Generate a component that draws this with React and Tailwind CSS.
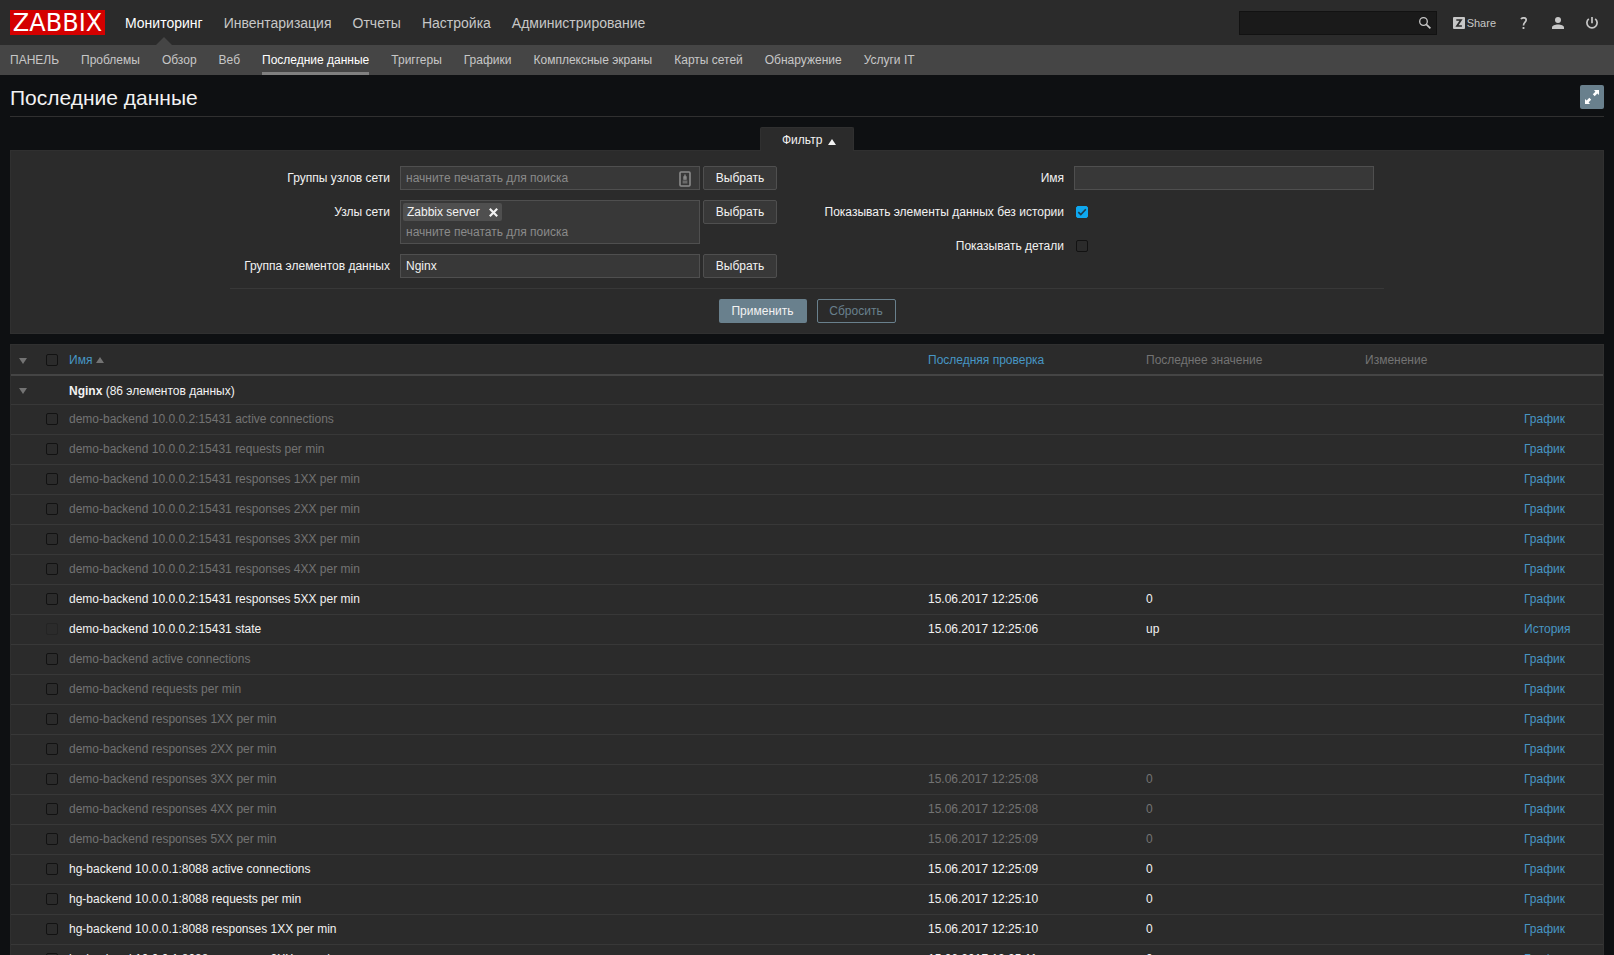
import React from "react";

const mainMenu = ["Мониторинг", "Инвентаризация", "Отчеты", "Настройка", "Администрирование"];

const subMenu = [
  "ПАНЕЛЬ",
  "Проблемы",
  "Обзор",
  "Веб",
  "Последние данные",
  "Триггеры",
  "Графики",
  "Комплексные экраны",
  "Карты сетей",
  "Обнаружение",
  "Услуги IT",
];

const items = [
  { name: "demo-backend 10.0.0.2:15431 active connections", active: false },
  { name: "demo-backend 10.0.0.2:15431 requests per min", active: false },
  { name: "demo-backend 10.0.0.2:15431 responses 1XX per min", active: false },
  { name: "demo-backend 10.0.0.2:15431 responses 2XX per min", active: false },
  { name: "demo-backend 10.0.0.2:15431 responses 3XX per min", active: false },
  { name: "demo-backend 10.0.0.2:15431 responses 4XX per min", active: false },
  { name: "demo-backend 10.0.0.2:15431 responses 5XX per min", active: true, checked: "15.06.2017 12:25:06", value: "0" },
  { name: "demo-backend 10.0.0.2:15431 state", active: true, checked: "15.06.2017 12:25:06", value: "up", text: true },
  { name: "demo-backend active connections", active: false },
  { name: "demo-backend requests per min", active: false },
  { name: "demo-backend responses 1XX per min", active: false },
  { name: "demo-backend responses 2XX per min", active: false },
  { name: "demo-backend responses 3XX per min", active: false, checked: "15.06.2017 12:25:08", value: "0" },
  { name: "demo-backend responses 4XX per min", active: false, checked: "15.06.2017 12:25:08", value: "0" },
  { name: "demo-backend responses 5XX per min", active: false, checked: "15.06.2017 12:25:09", value: "0" },
  { name: "hg-backend 10.0.0.1:8088 active connections", active: true, checked: "15.06.2017 12:25:09", value: "0" },
  { name: "hg-backend 10.0.0.1:8088 requests per min", active: true, checked: "15.06.2017 12:25:10", value: "0" },
  { name: "hg-backend 10.0.0.1:8088 responses 1XX per min", active: true, checked: "15.06.2017 12:25:10", value: "0" },
  { name: "hg-backend 10.0.0.1:8088 responses 2XX per min", active: true, checked: "15.06.2017 12:25:11", value: "0" },
];

function Triangle({ up, className }) {
  return (
    <svg viewBox="0 0 8 6" className={`inline-block h-[6px] w-[8px] fill-current ${className || ""}`} aria-hidden="true">
      <path d={up ? "M4 0L8 6H0z" : "M0 0H8L4 6z"} />
    </svg>
  );
}

function Checkbox({ id, label, defaultChecked, disabled }) {
  return (
    <span className="relative block h-3 w-3">
      <input
        id={id}
        type="checkbox"
        aria-label={label}
        defaultChecked={defaultChecked}
        disabled={disabled}
        className="peer block h-3 w-3 appearance-none rounded-[2px] border border-[#121212] checked:border-[#0fa8f0] checked:bg-[#0fa8f0] disabled:border-[#242424]"
      />
      <svg
        viewBox="0 0 12 12"
        className="pointer-events-none absolute inset-0 hidden h-3 w-3 peer-checked:block"
        fill="none"
        stroke="#1f3a4a"
        strokeWidth="1.6"
        aria-hidden="true"
      >
        <path d="M2.3 6.1L4.8 8.6L9.8 3.3" />
      </svg>
    </span>
  );
}

function Header() {
  return (
    <header>
      <div className="flex h-[45px] items-center justify-between bg-[#2b2b2b] px-[10px]">
        <div className="flex items-center gap-5">
          <a href="#" className="flex h-[25px] w-[95px] items-center justify-center bg-[#d40000] pt-[2px] font-['DejaVu_Sans',sans-serif] text-[24px] leading-[25px] text-white">
            ZABBIX
          </a>
          <nav className="flex h-[45px] items-center gap-[21px] text-[14px] leading-4">
            {mainMenu.map((item, index) => (
              <a
                key={item}
                href="#"
                className={`relative flex h-full items-center ${index === 0 ? "text-white" : "text-[#c7c7c7]"}`}
              >
                {item}
                {index === 0 && (
                  <svg viewBox="0 0 16 8" className="absolute bottom-0 left-1/2 h-2 w-4 -translate-x-1/2 fill-[#454545]" aria-hidden="true">
                    <path d="M8 0L16 8H0z" />
                  </svg>
                )}
              </a>
            ))}
          </nav>
        </div>

        <div className="flex items-center pr-[6px] text-[#c7c7c7]">
          <form className="flex h-6 w-[198px] items-center border border-[#121212] bg-[#1a1a1a] pr-[5px]">
            <input type="text" aria-label="Поиск" className="min-w-0 flex-1 bg-transparent px-1 outline-none" />
            <button type="button" aria-label="Найти">
              <svg viewBox="0 0 12 12" className="block h-3 w-3" fill="none" stroke="currentColor" aria-hidden="true">
                <circle cx="4.5" cy="4.5" r="3.8" strokeWidth="1.3" />
                <path d="M7.3 7.3L11.4 11.4" strokeWidth="1.7" />
              </svg>
            </button>
          </form>
          <a href="#" className="ml-4 flex items-center gap-[2px] text-[11px] leading-4">
            <svg viewBox="0 0 12 12" className="h-3 w-3" aria-hidden="true">
              <rect width="12" height="12" rx="1" fill="currentColor" />
              <path d="M3.3 3H8L4 9H8.9" fill="none" stroke="#2b2b2b" strokeWidth="1.7" />
            </svg>
            Share
          </a>
          <a href="#" aria-label="Справка" className="ml-[22px]">
            <svg viewBox="0 0 12 12" className="h-3 w-3" fill="none" stroke="currentColor" strokeWidth="1.7" aria-hidden="true">
              <path d="M3 2.2C3.6 1.1 4.6.8 5.6.8C7.3.8 8.2 1.7 8.2 3C8.2 5 5.5 5.4 5.5 8.4" />
              <path d="M4.6 11H6.4" strokeWidth="2" />
            </svg>
          </a>
          <a href="#" aria-label="Профиль" className="ml-[22px]">
            <svg viewBox="0 0 12 12" className="h-3 w-3 fill-current" aria-hidden="true">
              <circle cx="6" cy="3" r="3" />
              <path d="M0 12V10.6C0 8.6 3 7.6 6 7.6S12 8.6 12 10.6V12z" />
            </svg>
          </a>
          <a href="#" aria-label="Выход" className="ml-[22px]">
            <svg viewBox="0 0 12 12" className="h-3 w-3" fill="none" stroke="currentColor" strokeWidth="1.7" aria-hidden="true">
              <path d="M6 0V6.2" />
              <path d="M2.8 1.8A5.1 5.1 0 1 0 9.2 1.8" />
            </svg>
          </a>
        </div>
      </div>

      <nav className="flex h-[30px] gap-[22px] bg-[#454545] px-[10px] leading-4">
        {subMenu.map((item) => (
          <a
            key={item}
            href="#"
            className={
              item === "Последние данные"
                ? "border-b-[3px] border-[#808080] pt-[7px] text-white"
                : "pt-[7px] text-[#c7c7c7]"
            }
          >
            {item}
          </a>
        ))}
      </nav>
    </header>
  );
}

function SelectButton() {
  return (
    <button type="button" className="h-6 w-[74px] rounded-[2px] border border-[#4f4f4f] bg-[#383838] leading-4">
      Выбрать
    </button>
  );
}

function Filter() {
  const field = "w-[300px] border border-[#4f4f4f] bg-[#383838]";

  return (
    <section>
      <div className="flex justify-center">
        <button
          type="button"
          className="relative -mb-px flex h-6 w-[94px] items-center gap-[6px] rounded-t-[2px] border border-b-0 border-[#303030] bg-[#2b2b2b] pl-[21px]"
        >
          Фильтр
          <Triangle up className="mt-1" />
        </button>
      </div>
      <form className="border border-[#303030] bg-[#2b2b2b] pt-[15px] pb-[10px]">
        <div className="mx-auto flex w-fit gap-10 border-b border-[#383838] px-[10px] pb-[10px]">
          <div className="grid grid-cols-[150px_auto_auto] items-start gap-y-[10px]">
            <label htmlFor="groups" className="pt-1 text-right leading-4">Группы узлов сети</label>
            <div className={`${field} ml-[10px] flex h-6 items-center px-[5px]`}>
              <input
                id="groups"
                type="text"
                placeholder="начните печатать для поиска"
                className="min-w-0 flex-1 bg-transparent leading-4 outline-none placeholder:text-[#8a8a8a]"
              />
              <svg viewBox="0 0 12 16" className="mt-[2px] mr-[3px] h-4 w-3" fill="none" aria-hidden="true">
                <rect x="1" y="1" width="10" height="14" rx="1" stroke="#8a8a8a" strokeWidth="1.6" />
                <path d="M6 3.5V7M5 6H7V8H5z" stroke="#8a8a8a" strokeWidth="1.4" />
                <path d="M3.6 11H8.4" stroke="#6a6a6a" strokeWidth="3" />
              </svg>
            </div>
            <div className="pl-[3px]"><SelectButton /></div>

            <label htmlFor="hosts" className="pt-1 text-right leading-4">Узлы сети</label>
            <div className={`${field} ml-[10px] h-11 p-[2px]`}>
              <span className="flex h-[18px] w-[99px] items-center justify-between rounded-[2px] bg-[#4f4f4f] px-1 leading-4">
                Zabbix server
                <button type="button" aria-label="Удалить">
                  <svg viewBox="0 0 9 9" className="block h-[9px] w-[9px]" fill="none" stroke="currentColor" strokeWidth="2.2" aria-hidden="true">
                    <path d="M.8.8L8.2 8.2M8.2.8L.8 8.2" />
                  </svg>
                </button>
              </span>
              <input
                id="hosts"
                type="text"
                placeholder="начните печатать для поиска"
                className="mt-px block w-full bg-transparent px-[3px] leading-5 outline-none placeholder:text-[#8a8a8a]"
              />
            </div>
            <div className="pl-[3px]"><SelectButton /></div>

            <label htmlFor="application" className="pt-1 text-right leading-4">Группа элементов данных</label>
            <input id="application" type="text" defaultValue="Nginx" className={`${field} ml-[10px] h-6 px-[5px] leading-4 outline-none`} />
            <div className="pl-[3px]"><SelectButton /></div>
          </div>

          <div className="grid grid-cols-[247px_300px] content-start items-start gap-[10px]">
            <label htmlFor="name" className="pt-1 text-right leading-4">Имя</label>
            <input id="name" type="text" className={`${field} h-6 px-[5px] leading-4 outline-none`} />

            <label htmlFor="without-history" className="h-6 pt-1 text-right leading-4">Показывать элементы данных без истории</label>
            <div className="pt-[6px] pl-[2px]"><Checkbox id="without-history" defaultChecked /></div>

            <label htmlFor="details" className="h-6 pt-1 text-right leading-4">Показывать детали</label>
            <div className="pt-[6px] pl-[2px]"><Checkbox id="details" /></div>
          </div>
        </div>

        <div className="flex justify-center gap-[10px] pt-[10px]">
          <button type="button" className="h-6 w-[88px] rounded-[2px] bg-[#69808d]">Применить</button>
          <button type="button" className="h-6 w-[79px] rounded-[2px] border border-[#69808d] text-[#69808d]">Сбросить</button>
        </div>
      </form>
    </section>
  );
}

function ItemsTable() {
  return (
    <div className="mt-[10px] border border-[#303030] bg-[#2b2b2b]">
      <table className="w-full table-fixed border-collapse text-left leading-4">
        <colgroup>
          <col className="w-[30px]" />
          <col className="w-[23px]" />
          <col />
          <col className="w-[218px]" />
          <col className="w-[219px]" />
          <col className="w-[159px]" />
          <col className="w-[84px]" />
        </colgroup>
        <thead>
          <tr className="h-[30px] border-b-2 border-[#454545] text-[#737373]">
            <th className="pl-2 font-normal">
              <button type="button" aria-label="Свернуть все" className="block pt-[2px]"><Triangle className="block" /></button>
            </th>
            <th className="pl-[5px] font-normal"><Checkbox label="Выбрать все" /></th>
            <th className="pl-[5px] font-normal">
              <a href="#" className="text-[#4796c4]">
                Имя <Triangle up className="text-[#737373]" />
              </a>
            </th>
            <th className="pl-[5px] font-normal"><a href="#" className="text-[#4796c4]">Последняя проверка</a></th>
            <th className="pl-[5px] font-normal">Последнее значение</th>
            <th className="pl-[5px] font-normal">Изменение</th>
            <th />
          </tr>
        </thead>
        <tbody>
          <tr className="h-[29px] border-b border-[#383838]">
            <td className="pl-2 text-[#737373]">
              <button type="button" aria-label="Свернуть Nginx" className="block"><Triangle className="block" /></button>
            </td>
            <td />
            <td colSpan={5} className="pt-[2px] pl-[5px]"><b>Nginx</b> (86 элементов данных)</td>
          </tr>
          {items.map((item) => (
            <tr key={item.name} className={`h-[30px] border-b border-[#383838] ${item.active ? "" : "text-[#737373]"}`}>
              <td />
              <td className="pl-[5px]"><Checkbox label={item.name} disabled={item.text} /></td>
              <td className="pl-[5px]">{item.name}</td>
              <td className="pl-[5px]">{item.checked}</td>
              <td className="pl-[5px]">{item.value}</td>
              <td />
              <td className="pl-[5px]"><a href="#" className="text-[#4796c4]">{item.text ? "История" : "График"}</a></td>
            </tr>
          ))}
        </tbody>
      </table>
    </div>
  );
}

function App() {
  return (
    <div className="min-h-screen bg-[#0e1012] font-['Liberation_Sans',Arial,sans-serif] text-[12px] text-[#f2f2f2]">
      <Header />
      <main className="px-[10px]">
        <div className="mb-[10px] flex items-end justify-between border-b border-[#303030] pt-[10px] pb-[7px]">
          <h1 className="text-[21px] leading-[22px]">Последние данные</h1>
          <button type="button" aria-label="Полный экран" className="flex h-6 w-6 items-center justify-center rounded-[2px] bg-[#69808d]">
            <svg viewBox="0 0 14 14" className="h-[14px] w-[14px] fill-white" aria-hidden="true">
              <path d="M9 0H14V5L12.3 3.6L9.7 6.2L7.8 4.3L10.4 1.7z" />
              <path d="M5 14H0V9L1.7 10.4L4.3 7.8L6.2 9.7L3.6 12.3z" />
            </svg>
          </button>
        </div>
        <Filter />
        <ItemsTable />
      </main>
    </div>
  );
}

export default App;
